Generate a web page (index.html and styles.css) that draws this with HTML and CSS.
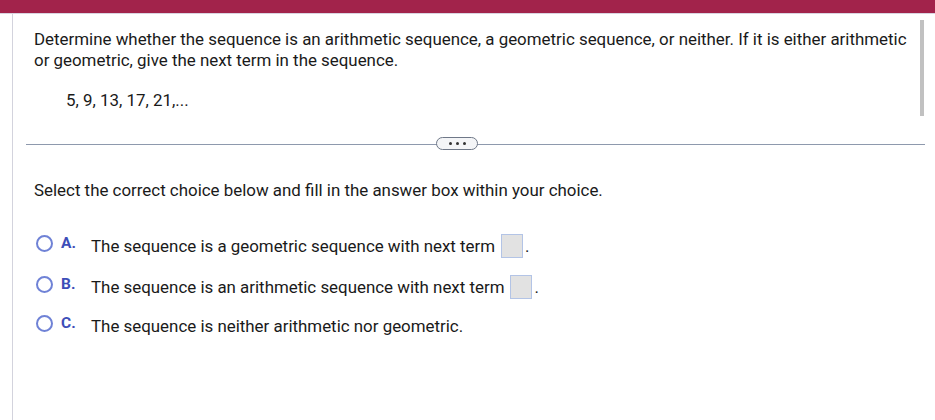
FILE: index.html
```html
<!DOCTYPE html>
<html lang="en">
<head>
    <meta charset="UTF-8">
    <meta name="viewport" content="width=device-width, initial-scale=1.0">
    <title>Question</title>
    <link rel="stylesheet" href="styles.css">
</head>
<body>
    <div class="topbar"></div>

    <div class="page">
        <!-- Question text -->
        <div class="question">
            <p class="prompt">Determine whether the sequence is an arithmetic sequence, a geometric sequence, or neither. If it is either arithmetic or geometric, give the next term in the sequence.</p>
            <p class="sequence">5, 9, 13, 17, 21,...</p>
        </div>

        <div class="divider">
            <span class="more-btn"><i></i><i></i><i></i></span>
        </div>

        <!-- Answer area -->
        <div class="answer">
            <p class="instructions">Select the correct choice below and fill in the answer box within your choice.</p>
            <ul class="choices">
                <li class="choice">
                    <span class="radio"></span>
                    <span class="letter">A.</span>
                    <span class="choice-text">The sequence is a geometric sequence with next term <span class="answer-box"></span>.</span>
                </li>
                <li class="choice">
                    <span class="radio"></span>
                    <span class="letter">B.</span>
                    <span class="choice-text">The sequence is an arithmetic sequence with next term <span class="answer-box"></span>.</span>
                </li>
                <li class="choice">
                    <span class="radio"></span>
                    <span class="letter">C.</span>
                    <span class="choice-text">The sequence is neither arithmetic nor geometric.</span>
                </li>
            </ul>
        </div>

        <div class="scrollbar"></div>
    </div>
</body>
</html>
```

FILE: styles.css
```css
body {
    margin: 0;
    font-family: Roboto, "Liberation Sans", sans-serif;
    font-size: 16.9px;
    color: #1a1a1a;
    background: #fff;
    height: 420px;
    overflow: hidden;
}
.topbar {
    height: 13px;
    background-color: #a2234b;
    border-bottom: 1px solid #d9d4e0;
}
.page {
    position: relative;
    margin-left: 12px;
    border-left: 1px solid #d3d3dd;
    height: 406px;
    padding: 0 10px 0 13px;
}
.question {
    padding: 15px 6px 0 8px;
}
.prompt {
    margin: 0;
    line-height: 21px;
}
.sequence {
    margin: 19px 0 0 32px;
    line-height: 21px;
}
.divider {
    position: relative;
    margin-top: 33px;
    height: 1px;
    background: #8e99ad;
}
.more-btn {
    position: absolute;
    left: 410px;
    top: -7px;
    width: 40px;
    height: 11px;
    border: 1px solid #6f7888;
    border-radius: 7px;
    background: #f4f5f7;
    display: flex;
    justify-content: center;
    align-items: center;
    gap: 4px;
}
.more-btn i {
    width: 3px;
    height: 3px;
    border-radius: 50%;
    background: #333;
}
.answer {
    padding: 0 0 0 8px;
}
.instructions {
    margin: 35px 0 0;
    line-height: 21px;
}
.choices {
    list-style: none;
    margin: 33px 0 0;
    padding: 0;
}
.choice {
    display: flex;
    align-items: center;
    height: 24px;
    margin-bottom: 17px;
}
.choice:nth-child(2) {
    margin-bottom: 15px;
}
.radio {
    width: 13px;
    height: 13px;
    border: 2px solid #6f82d6;
    border-radius: 50%;
    margin: -5px 8px 0 2px;
    flex-shrink: 0;
}
.letter {
    width: 30px;
    font-weight: bold;
    color: #3d4eb8;
    font-size: 15.5px;
    margin-top: -6px;
}
.choice-text {
    display: flex;
    align-items: center;
}
.answer-box {
    display: inline-block;
    width: 20px;
    height: 22px;
    background: #e2e2e2;
    border: 1px solid #b3c4e6;
    margin: 0 2px 0 6px;
}
.scrollbar {
    position: absolute;
    right: 11px;
    top: 6px;
    width: 4px;
    height: 96px;
    background: #c1c1c1;
}
```
